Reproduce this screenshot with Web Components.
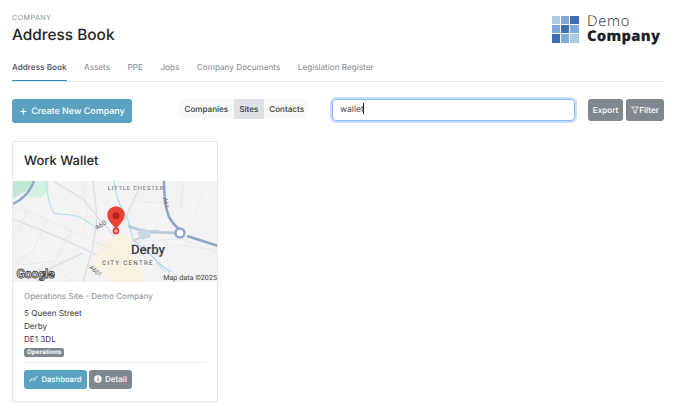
<!DOCTYPE html>
<html lang="en">
<head>
<meta charset="utf-8">
<title>Address Book</title>
<style>
html,body{margin:0;padding:0;background:#fff;font-family:Inter,"Liberation Sans",sans-serif;color:#212529;text-rendering:geometricPrecision;}
body{width:681px;height:413px;overflow:hidden;}
</style>
</head>
<body>
<ab-page>
  <ab-header slot="header" kicker="COMPANY" title="Address Book"></ab-header>
  <ab-tabs slot="tabs"></ab-tabs>
  <ab-toolbar slot="toolbar"></ab-toolbar>
  <ab-card slot="content"></ab-card>
</ab-page>
<script>
function def(name, css, html){
  customElements.define(name, class extends HTMLElement{
    connectedCallback(){
      if(this.shadowRoot) return;
      const r=this.attachShadow({mode:'open'});
      const h=typeof html==='function'?html(this):html;
      r.innerHTML='<style>'+css+'</style>'+h;
    }
  });
}
def('ab-page',
 ':host{display:block;padding:0 17px 0 12px;box-sizing:border-box;width:681px}',
 '<slot name="header"></slot><slot name="tabs"></slot><slot name="toolbar"></slot><slot name="content"></slot>');

def('ab-logo',
 ':host{display:flex;align-items:flex-start;gap:8px;width:108px;margin-right:4px}'+
 '.g{display:grid;grid-template-columns:repeat(3,9px);grid-auto-rows:9px;gap:0;flex:none}'+
 '.g i{display:block;outline:.5px solid #fff;outline-offset:-.5px}'+
 '.t{display:flex;flex-direction:column;font-family:"Open Sans",Lato,sans-serif;color:#1f2328;white-space:nowrap;margin-top:-2px}'+
 '.a{font-size:14.800px;line-height:15px;font-weight:300;letter-spacing:.7px}'+
 '.b{font-size:14.800px;line-height:14px;font-weight:800;letter-spacing:.25px}',
 (()=>{const L='#a9c9e7',M='#7eaadc',D='#3d6eb6';
  return '<div class="g">'+[L,M,D,M,D,M,D,M,L].map(c=>'<i style="background:'+c+'"></i>').join('')+'</div><div class="t"><span class="a">Demo</span><span class="b">Company</span></div>';})());

def('ab-header',
 ':host{display:flex;justify-content:space-between;align-items:flex-start;height:55px}'+
 '.k{font-size:7.200px;line-height:10px;letter-spacing:.4px;color:#8a9197;margin-top:12.500px}'+
 '.h{font-size:15.400px;line-height:22px;font-weight:500;color:#212529;margin-top:1px}'+
 'ab-logo{margin-top:16px}',
 el=>'<div><div class="k">'+el.getAttribute('kicker')+'</div><div class="h">'+el.getAttribute('title')+'</div></div><ab-logo></ab-logo>');

def('ab-tabs',
 ':host{display:flex;height:26px;border-bottom:1px solid #e3e6e9;gap:17.500px;font-size:8.200px;color:#7f878e}'+
 'span{display:block;padding-top:6px;line-height:12px;box-sizing:border-box;height:26px;white-space:nowrap}'+
 '.on{color:#495057;font-weight:500;border-bottom:1.500px solid #2a93bd}',
 '<span class="on">Address Book</span><span>Assets</span><span>PPE</span><span>Jobs</span><span>Company Documents</span><span>Legislation Register</span>');

def('ab-button',
 ':host{display:inline-flex;flex:none;align-items:center;justify-content:center;box-sizing:border-box;border-radius:3px;color:#fff;font-size:8.100px;font-weight:500;white-space:nowrap;background:var(--bg,#80888f);height:var(--h,22px);gap:var(--g,3px);}',
 '<slot></slot>');

def('ab-seg',
 ':host{display:flex;flex:none;width:129px;height:20px;background:#f8f9fa;border-radius:3px;font-size:8.100px;font-weight:500;color:#343a40;overflow:hidden}'+
 'span{display:flex;align-items:center;padding:0 5.500px;line-height:1}'+
 '.on{background:#dee2e6}',
 '<span>Companies</span><span class="on">Sites</span><span>Contacts</span>');

def('ab-search',
 ':host{display:block;flex:none;box-sizing:border-box;width:243px;height:22px;border:1px solid #86b7fe;border-radius:4px;box-shadow:0 0 0 2px #c8defd;font-size:8.600px;color:#495057;line-height:20px;padding-left:7px}'+
 'b{display:inline-block;width:.6px;height:11px;background:#222;vertical-align:-2px;margin-left:-.5px}',
 'wallet<b></b>');

def('ab-toolbar',
 ':host{display:flex;align-items:flex-start;margin-top:17px;height:42px;position:relative}'+
 'ab-seg{margin-left:47px}ab-search{margin-left:24px}'+
 '.create{--bg:#5ba2c0;--h:24px;width:120px;font-size:8.950px;--g:4px}'+
 '.exp{margin-left:13px;width:35px}'+
 '.fil{margin-left:3px;width:38px;--g:0px}'+
 'svg{display:block;flex:none}',
 '<ab-button class="create"><span style="font-size:12px;line-height:1;font-weight:400">+</span><span>Create New Company</span></ab-button>'+
 '<ab-seg></ab-seg><ab-search></ab-search>'+
 '<ab-button class="exp">Export</ab-button>'+
 '<ab-button class="fil"><svg width="8" height="8" viewBox="0 0 8 8" fill="none" stroke="#fff" stroke-width=".8"><path d="M.5 1h7L5 4v3.200L3 6.400V4z"/></svg>Filter</ab-button>');

def('ab-map',
 ':host{display:block;height:101px;position:relative;overflow:hidden;background:#f3f3f4}'+
 'svg{display:block;position:absolute;inset:0}'+
 'text{font-family:Roboto,Inter,sans-serif}',
 `<svg width="205" height="101" viewBox="0 0 205 101">
  <path d="M0 0h21l-8 10 -13 8z" fill="#bfe9d3"/>
  <path d="M21 0h14l1 8 -8 9 -12 -1 -3 -6z" fill="#d3f0e2"/>
  <path d="M92 58l10 -4 16 0 2 12 -4 6 12 18 4 11H96l-4 -8 -8 -4 -6 -8 8 -12z" fill="#faf2e0"/>
  <g fill="none" stroke="#e4e6ea" stroke-width=".8">
   <path d="M0 26l34 12 24 12 44 20M14 30L0 60M34 38L20 70 0 84M58 50L40 84 60 101M70 0l4 30 -4 22M170 0l-2 30M190 10l-8 24M120 20l30 2M10 84l30 -4M150 50l55 22M130 74l36 -10 39 5M160 101l-6 -24M125 60l40 -2"/>
  </g>
  <g fill="none" stroke="#dce1e8" stroke-width="1.600">
   <path d="M40 0l30 18 18 22 14 16M0 38l50 20 34 16M80 0l4 36 -4 30 -10 35M125 10L118 24l-8 20M70 72l-30 14 -16 15M130 64l24 30 10 7"/>
  </g>
  <path d="M0 23C10 18 16 12 21 0" fill="none" stroke="#8da6c9" stroke-width="2.400"/>
  <path d="M101 0c1 12 5 24 12 35 4 7 5 16 7 23 4 6 11 10 18 16l12 12 11 7 10 8" fill="none" stroke="#9fdcef" stroke-width="1.100"/>
  <path d="M33 0c1 12 3 24 8 32 7 2 15 1 22 3 8 2 14 8 22 13" fill="none" stroke="#9fdcef" stroke-width=".9"/>
  <path d="M151 0c0 14 1 26 5 36 3 5 6 9 10 12" fill="none" stroke="#8ea7cb" stroke-width="2.600"/>
  <path d="M115 45l18 6 32 1" fill="none" stroke="#b9c8dc" stroke-width="2.600"/>
  <path d="M174 55l31 10" fill="none" stroke="#8ea7cb" stroke-width="2.600"/>
  <path d="M128 50h18M120 60l16 -8" fill="none" stroke="#c6d1e0" stroke-width="2"/>
  <path d="M124 52l6 -5 7 3 1 6 -9 3z" fill="#cbd6e4"/>
  <circle cx="167" cy="52" r="4.500" fill="#fff" stroke="#8ea7cb" stroke-width="2.400"/>
  <text x="123" y="9.300" font-size="5.800" letter-spacing=".85" fill="#5f6368" text-anchor="middle">LITTLE CHESTER</text>
  <text x="0" y="0" font-size="6" fill="#5f6368" transform="translate(150 17) rotate(80)">A61</text>
  <text x="0" y="0" font-size="6.500" fill="#5f6368" transform="translate(84 49) rotate(-32)">A60</text>
  <text x="135" y="73" font-size="13.200" font-weight="500" fill="#3c4043" text-anchor="middle">Derby</text>
  <text x="115" y="84" font-size="6.200" letter-spacing="1.300" fill="#4a4e52" text-anchor="middle">CITY CENTRE</text>
  <text x="0" y="0" font-size="6" fill="#5f6368" transform="translate(76 87) rotate(40)">A601</text>
  <path d="M103 50c-1-6-8.700-9-8.700-16a8.700 8.700 0 0 1 17.400 0c0 7-7.700 10-8.700 16z" fill="#ea4335"/>
  <circle cx="103" cy="34.500" r="3.500" fill="#b3261e"/>
  <circle cx="103" cy="50" r="3.400" fill="#ea4335"/>
  <circle cx="103" cy="50" r="1.700" fill="#f5a9a3"/>
  <text x="3.500" y="97.300" font-size="12.500" font-weight="700" fill="#fff" stroke="#4a4a4a" stroke-width=".9" letter-spacing="-.3">Google</text>
  <rect x="148" y="91" width="57" height="10" fill="#f3f3f4" opacity=".75"/>
  <text x="204" y="98.500" font-size="7.200" fill="#3c4043" text-anchor="end">Map data ©2025</text>
 </svg>`);

def('ab-card',
 ':host{display:block;box-sizing:border-box;width:205.500px;height:261px;border:1px solid #e6e8ea;border-radius:3px;background:#fff;box-shadow:0 .5px 1px rgba(0,0,0,.05)}'+
 '.t{height:39px;box-sizing:border-box;padding:10px 11px 0;font-size:13px;line-height:18px;font-weight:500;color:#212529}'+
 '.b{padding:8px 11px 0}'+
 '.s{font-size:8.150px;line-height:12px;color:#868e96}'+
 '.a{font-size:8.150px;line-height:12.800px;color:#343a40;margin-top:5px}'+
 '.pw{display:flex;margin-top:3px}'+
 '.p{display:flex;align-items:center;background:#80888f;color:#fff;border-radius:2.500px;font-size:6.200px;font-weight:700;height:9px;padding:0 3px;letter-spacing:.1px}'+
 'hr{border:0;border-top:1px solid #eceef0;margin:5px 0 6.500px}'+
 '.r{display:flex;gap:2px}'+
 'ab-button{--h:19px;font-size:8px}'+
 '.d{--bg:#5ba2c0;width:63px;font-size:7.700px}.e{width:43px}svg{display:block;flex:none}',
 `<div class="t">Work Wallet</div><ab-map></ab-map>
 <div class="b"><div class="s">Operations Site - Demo Company</div>
 <div class="a">5 Queen Street<br>Derby<br>DE1 3DL</div>
 <div class="pw"><span class="p">Operations</span></div>
 <hr>
 <div class="r"><ab-button class="d"><svg width="9" height="8" viewBox="0 0 9 8" fill="none" stroke="#fff" stroke-width=".8"><path d="M.5 7L3 3.500l2 2L8.500 1M5 2.500l1.500 1.500M.5 4.500L2 6"/></svg>Dashboard</ab-button>
 <ab-button class="e"><svg width="8" height="8" viewBox="0 0 8 8"><circle cx="4" cy="4" r="3.800" fill="#fff"/><rect x="3.400" y="3.300" width="1.200" height="3" fill="#80888f"/><rect x="3.400" y="1.600" width="1.200" height="1.100" fill="#80888f"/></svg>Detail</ab-button></div></div>`);
</script>
</body>
</html>
